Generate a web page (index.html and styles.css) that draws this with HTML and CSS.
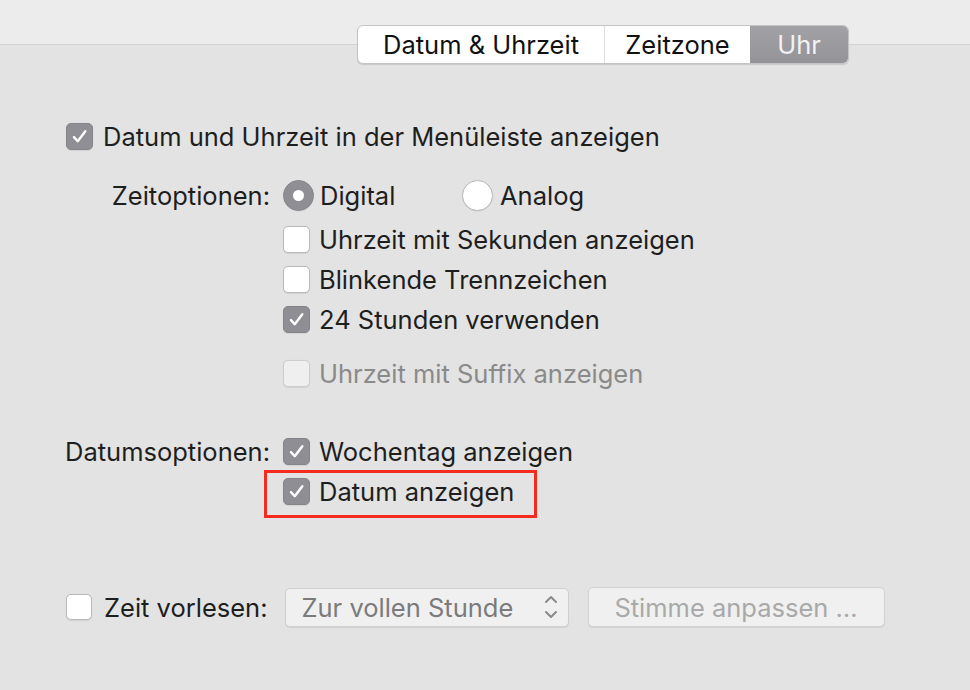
FILE: index.html
```html
<!DOCTYPE html>
<html lang="de">
<head>
<meta charset="utf-8">
<link rel="stylesheet" href="styles.css">
</head>
<body>
<div class="seg">
  <div class="seg-item seg-first">Datum &amp; Uhrzeit</div>
  <div class="seg-item seg-mid">Zeitzone</div>
  <div class="seg-item seg-active">Uhr</div>
</div>

<div class="main">
  <div class="row row-first">
    <span class="cb checked"><svg viewBox="0 0 27 27"><path d="M7.5 14.2 L11.6 18.6 L19.8 7.8" /></svg></span>
    <span class="txt gap10">Datum und Uhrzeit in der Menüleiste anzeigen</span>
  </div>

  <div class="row row-zeit">
    <span class="label">Zeitoptionen:</span>
    <span class="radio on"></span>
    <span class="txt gap6 digital">Digital</span>
    <span class="radio"></span>
    <span class="txt gap7">Analog</span>
  </div>
  <div class="row row-sub">
    <span class="label"></span>
    <span class="cb"></span>
    <span class="txt gap9">Uhrzeit mit Sekunden anzeigen</span>
  </div>
  <div class="row">
    <span class="label"></span>
    <span class="cb"></span>
    <span class="txt gap9">Blinkende Trennzeichen</span>
  </div>
  <div class="row">
    <span class="label"></span>
    <span class="cb checked"><svg viewBox="0 0 27 27"><path d="M7.5 14.2 L11.6 18.6 L19.8 7.8" /></svg></span>
    <span class="txt gap9">24 Stunden verwenden</span>
  </div>
  <div class="row row-suffix">
    <span class="label"></span>
    <span class="cb disabled"></span>
    <span class="txt gap9 dim">Uhrzeit mit Suffix anzeigen</span>
  </div>

  <div class="row row-datum">
    <span class="label">Datumsoptionen:</span>
    <span class="cb checked"><svg viewBox="0 0 27 27"><path d="M7.5 14.2 L11.6 18.6 L19.8 7.8" /></svg></span>
    <span class="txt gap9">Wochentag anzeigen</span>
  </div>
  <div class="row">
    <span class="label"></span>
    <span class="hl-wrap">
      <span class="cb checked"><svg viewBox="0 0 27 27"><path d="M7.5 14.2 L11.6 18.6 L19.8 7.8" /></svg></span>
      <span class="txt gap9">Datum anzeigen</span>
      <span class="highlight"></span>
    </span>
  </div>

  <div class="row row-bottom">
    <span class="cb cb26"></span>
    <span class="txt gap12">Zeit vorlesen:</span>
    <span class="popup">
      <span class="popup-text">Zur vollen Stunde</span>
      <svg class="chev" viewBox="0 0 14 26"><path d="M2 8 L7 3 L12 8 M2 18 L7 23 L12 18" /></svg>
    </span>
    <span class="button">Stimme anpassen …</span>
  </div>
</div>
</body>
</html>
```

FILE: styles.css
```css
html, body {
  margin: 0;
  padding: 0;
}
body {
  width: 970px;
  height: 690px;
  overflow: hidden;
  background: linear-gradient(to bottom, #ececec 0, #ececec 44px, #d2d2d2 44px, #d2d2d2 45px, #e3e3e3 45px);
  font-family: "Inter", "Noto Sans", sans-serif;
  font-size: 25.5px;
  color: #1e1e1e;
}

/* segmented control */
.seg {
  display: flex;
  margin: 25px 0 0 357px;
  width: 492px;
  height: 39px;
  box-sizing: border-box;
  border: 1px solid #c4c4c4;
  border-radius: 6px;
  box-shadow: 0 1px 1px rgba(0,0,0,0.12);
  overflow: hidden;
  background: #fff;
}
.seg-item {
  display: flex;
  align-items: center;
  justify-content: center;
  height: 100%;
  color: #111;
}
.seg-first { width: 246px; border-right: 1px solid #dedede; }
.seg-mid { width: 145px; }
.seg-active {
  flex: 1;
  background: linear-gradient(#a2a1a6, #949398);
  color: #f2f2f2;
}

/* layout */
.main {
  padding-left: 56px;
}
.row {
  display: flex;
  align-items: center;
  height: 40px;
}
.row-first {
  margin-top: 52px;
  padding-left: 10px;
}
.row-zeit { margin-top: 19px; }
.row-sub { margin-top: 4px; }
.row-suffix { margin-top: 14px; }
.row-datum { margin-top: 38px; }
.row-bottom {
  margin-top: 76px;
  padding-left: 10px;
}
.label {
  width: 214px;
  flex-shrink: 0;
  margin-right: 13px;
  display: flex;
  justify-content: flex-end;
  white-space: nowrap;
}

.txt { white-space: nowrap; }
.gap6 { margin-left: 6px; }
.gap7 { margin-left: 7px; }
.gap9 { margin-left: 9px; }
.gap10 { margin-left: 10px; }
.gap12 { margin-left: 12px; }
.digital { width: 142px; }
.dim { color: #8a8a8a; }

/* checkbox */
.cb {
  width: 27px;
  height: 27px;
  flex-shrink: 0;
  box-sizing: border-box;
  border-radius: 5px;
  background: #fff;
  border: 1px solid #b9b9b9;
  box-shadow: 0 0.5px 1px rgba(0,0,0,0.08);
  display: inline-flex;
}
.cb26 { width: 26px; height: 26px; }
.cb.checked {
  background: #8f8e94;
  border-color: #86858a;
}
.cb.disabled {
  background: #efefef;
  border-color: #cdcdcd;
}
.cb svg {
  width: 100%;
  height: 100%;
}
.cb svg path {
  fill: none;
  stroke: #fff;
  stroke-width: 2.6;
  stroke-linecap: round;
  stroke-linejoin: round;
}

/* radio */
.radio {
  width: 31px;
  height: 31px;
  flex-shrink: 0;
  box-sizing: border-box;
  border-radius: 50%;
  background: #fff;
  border: 1px solid #b8b8b8;
  box-shadow: 0 0.5px 1px rgba(0,0,0,0.08);
  display: inline-flex;
  align-items: center;
  justify-content: center;
}
.radio.on {
  background: #8f8e94;
  border-color: #88878c;
}
.radio.on::after {
  content: "";
  width: 11px;
  height: 11px;
  border-radius: 50%;
  background: #fff;
}

/* highlight box */
.hl-wrap {
  position: relative;
  display: inline-flex;
  align-items: center;
  height: 40px;
}
.highlight {
  position: absolute;
  left: -19px;
  top: -1px;
  width: 273px;
  height: 48px;
  box-sizing: border-box;
  border: 3px solid #f52b1f;
}

/* popup + button */
.popup {
  margin-left: 17px;
  width: 284px;
  height: 39px;
  flex-shrink: 0;
  box-sizing: border-box;
  border: 1px solid #d0d0d0;
  border-radius: 5px;
  background: #f0f0f0;
  box-shadow: 0 1px 1px rgba(0,0,0,0.08);
  display: flex;
  align-items: center;
  justify-content: space-between;
  padding: 0 10px 0 16px;
  color: #7b7b7b;
}
.chev {
  width: 14px;
  height: 26px;
}
.chev path {
  fill: none;
  stroke: #8a8a8a;
  stroke-width: 2;
  stroke-linecap: round;
  stroke-linejoin: round;
}
.button {
  margin-left: 19px;
  width: 297px;
  height: 40px;
  flex-shrink: 0;
  box-sizing: border-box;
  border: 1px solid #d2d2d2;
  border-radius: 5px;
  background: #f0f0f0;
  box-shadow: 0 1px 1px rgba(0,0,0,0.08);
  display: flex;
  align-items: center;
  justify-content: center;
  color: #a9a9a9;
}
```
